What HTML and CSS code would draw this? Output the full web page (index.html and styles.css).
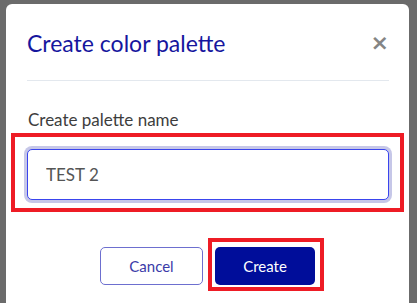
FILE: index.html
```html
<!DOCTYPE html>
<html lang="en">
<head>
  <meta charset="UTF-8">
  <meta name="viewport" content="width=device-width, initial-scale=1.0">
  <title>Create color palette</title>
  <link rel="stylesheet" href="styles.css">
</head>
<body>

  <div class="modal">
    <div class="modal-header">
      <h2 class="modal-title">Create color palette</h2>
      <button class="close-btn" aria-label="Close">&times;</button>
    </div>

    <div class="modal-body">
      <label for="paletteName">Create palette name</label>
      <div class="highlight highlight-input">
        <input type="text" id="paletteName" value="TEST 2">
      </div>
    </div>

    <div class="modal-footer">
      <button class="btn btn-outline">Cancel</button>
      <div class="highlight highlight-btn">
        <button class="btn btn-primary">Create</button>
      </div>
    </div>
  </div>

</body>
</html>
```

FILE: styles.css
```css
body {
  font-family: 'Lato', 'Noto Sans', sans-serif;
  margin: 0;
  padding: 0;
  background-color: #6b6b6b;
  height: 303px;
  overflow: hidden;
}

.modal {
  background-color: #fff;
  margin: 4px 8px 0 6px;
  border-radius: 6px 6px 0 0;
  height: 299px;
  padding: 0 20px 0 21px;
}

.modal-header {
  display: flex;
  align-items: center;
  justify-content: space-between;
  height: 76px;
  border-bottom: 1px solid #e3e8ee;
}

.modal-title {
  margin: 0;
  padding-top: 1px;
  font-size: 23px;
  font-weight: normal;
  color: #16169e;
}

.close-btn {
  background: none;
  border: none;
  padding: 0;
  margin: 1px 0 0 0;
  font-family: 'DejaVu Sans', sans-serif;
  font-size: 22px;
  font-weight: bold;
  color: #858585;
  line-height: 1;
  cursor: pointer;
}

.modal-body {
  padding-top: 28px;
}

label {
  display: block;
  font-size: 17px;
  color: #3d3d3d;
  margin-bottom: 3px;
  padding-left: 1px;
}

.highlight {
  border: 4px solid #ee1c25;
}

.highlight-input {
  margin: 0 -15px 0 -16px;
  padding: 12px 11px 8px 12px;
}

input {
  display: block;
  width: 100%;
  height: 51px;
  box-sizing: border-box;
  padding: 0 18px;
  font-family: inherit;
  font-size: 17px;
  color: #555;
  border: 1px solid #3a45ee;
  border-radius: 5px;
  box-shadow: 0 0 0 3px #c6c7e8;
  outline: none;
}

.modal-footer {
  display: flex;
  justify-content: center;
  align-items: flex-start;
  gap: 5px;
  padding-top: 26px;
  padding-left: 8px;
}

.highlight-btn {
  padding: 5px 5px 2px 3px;
}

.btn {
  width: 103px;
  height: 38px;
  font-family: inherit;
  font-size: 15px;
  border-radius: 5px;
  cursor: pointer;
}

.btn-outline {
  margin-top: 9px;
  background-color: #fff;
  color: #3b3ba8;
  border: 1px solid #6d6fcf;
}

.btn-primary {
  display: block;
  width: 100px;
  background-color: #000d9a;
  color: #fff;
  border: none;
}
```
